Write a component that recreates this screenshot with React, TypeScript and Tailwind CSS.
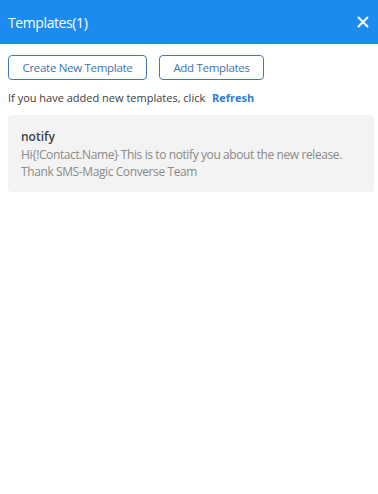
import React from 'react';

export default function App() {
  return (
    <div className="w-[378px] h-[494px] bg-white font-['Open_Sans',sans-serif]">
      <div className="h-[44px] bg-[#1b8bef] flex items-center justify-between pl-[8px] pr-[9px]">
        <h1 className="text-white text-[14px] tracking-[-0.4px]">Templates(1)</h1>
        <button className="text-white p-0">
          <svg width="12" height="12" viewBox="0 0 12 12">
            <path d="M1.5 1.5 L10.5 10.5 M10.5 1.5 L1.5 10.5" stroke="white" strokeWidth="2" strokeLinecap="round" />
          </svg>
        </button>
      </div>
      <div className="pl-[8px] pr-[4px]">
        <div className="flex gap-[12px] mt-[11px]">
          <button className="h-[25px] w-[139px] border border-[#3f7ab5] rounded-[4px] text-[#3b74b6] text-[11.5px] tracking-[-0.3px]">
            Create New Template
          </button>
          <button className="h-[25px] w-[105px] border border-[#3f7ab5] rounded-[4px] text-[#3b74b6] text-[11.5px] tracking-[-0.3px]">
            Add Templates
          </button>
        </div>
        <p className="mt-[10px] text-[11px] text-[#3e3e3c]">
          If you have added new templates, click <span className="ml-[4px] font-bold text-[#2f7ed0]">Refresh</span>
        </p>
        <div className="mt-[8px] bg-[#f3f3f3] rounded-[4px] px-[13px] pt-[13px] pb-[12px]">
          <div className="text-[12px] font-semibold text-[#3e3e3c] leading-[17px]">notify</div>
          <div className="text-[12px] text-[#8a8a8a] leading-[17px] mt-[1px] tracking-[-0.4px]">
            Hi{'{'}!Contact.Name{'}'} This is to notify you about the new release.
            <br />
            Thank SMS-Magic Converse Team
          </div>
        </div>
      </div>
    </div>
  );
}
